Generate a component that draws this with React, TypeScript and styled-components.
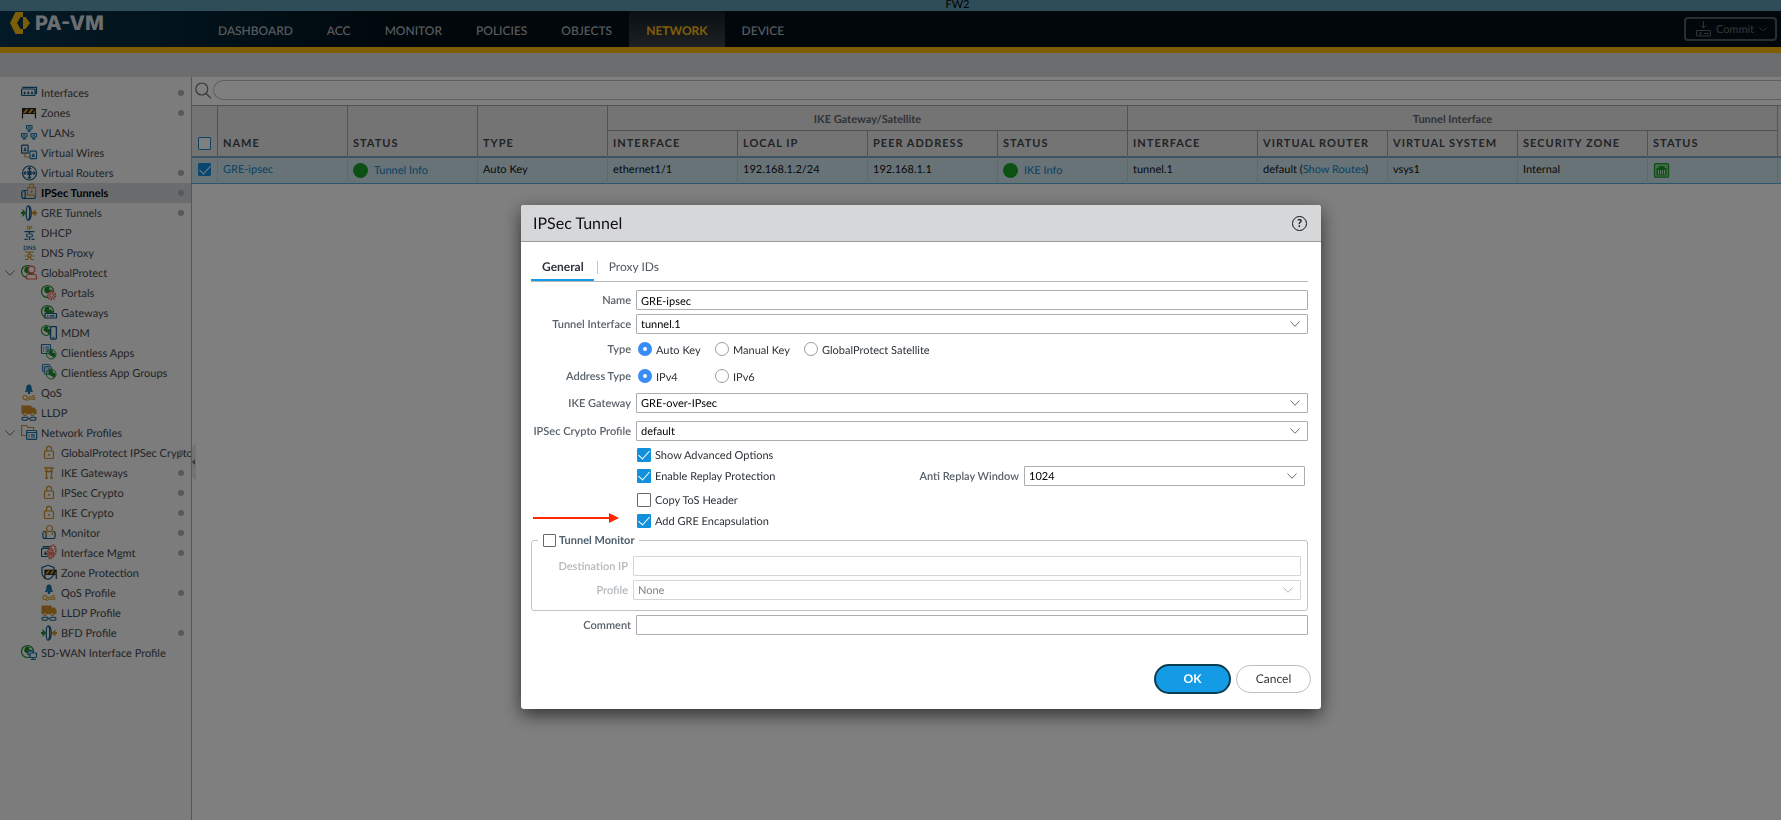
import React from 'react';
import styled, { createGlobalStyle, css } from 'styled-components';

const BLUE = '#1a74a8';
const NAVY = '#125a86';
const GOLD = '#cf9128';
const GREEN = '#1c8c2c';
const RED = '#e8604a';

const GlobalStyle = createGlobalStyle`
  * { box-sizing: border-box; }
  body {
    margin: 0;
    background: #fff;
    font-family: Lato, "Liberation Sans", sans-serif;
    font-size: 11px;
    line-height: 16px;
    text-rendering: geometricPrecision;
    color: #111;
  }
  button, input, select { font: inherit; color: inherit; margin: 0; text-rendering: inherit; }
`;

/* ---------- page frame ---------- */

const Page = styled.div`
  display: flex;
  flex-direction: column;
  min-height: 100vh;
  overflow: hidden;
`;

const HostBar = styled.div`
  height: 11px;
  padding-left: 134px;
  background: #5e99b3;
  color: #000;
  text-align: center;
  line-height: 10px;
`;

const Header = styled.header`
  display: flex;
  height: 42px;
  border-bottom: 6px solid #ffba00;
  background: linear-gradient(90deg, #07364e 0, #042434 200px, #020e16 420px);
`;

const Brand = styled.div`
  display: flex;
  align-items: center;
  gap: 4px;
  width: 201px;
  height: 24px;
  padding-left: 10px;
  color: #d8dde0;
  font-family: Inter, Lato, sans-serif;
  font-size: 20px;
  font-weight: 800;
`;

const Nav = styled.nav`
  display: flex;
`;

const NavLink = styled.a<{ $active?: boolean }>`
  display: flex;
  align-items: center;
  padding: 3px 17px 0;
  font-size: 12px;
  font-weight: 500;
  text-decoration: none;
  color: ${(p) => (p.$active ? '#fcbf10' : '#b2bac0')};
  ${(p) =>
    p.$active &&
    css`
      font-weight: 700;
      background: linear-gradient(#141f26, #3a4246);
    `}
`;

const CommitButton = styled.button`
  display: flex;
  align-items: center;
  gap: 5px;
  width: 93px;
  height: 24px;
  margin: 6px 4px 0 auto;
  padding: 0 8px 0 10px;
  border: 2px solid #555c62;
  border-radius: 4px;
  background: transparent;
  color: #666e74;
`;

const SubBar = styled.div`
  height: 24px;
  background: #d8dadf;
`;

const Workspace = styled.div`
  display: flex;
  flex: 1;
`;

/* ---------- sidebar ---------- */

const Sidebar = styled.nav`
  flex: none;
  width: 192px;
  padding-top: 6px;
  overflow: hidden;
  border-right: 1px solid #aaadb0;
  background: #f8f8f8;
`;

const TreeRow = styled.a<{ $level: number; $selected?: boolean }>`
  display: flex;
  align-items: center;
  height: 20px;
  padding-left: ${(p) => (p.$level ? 25 : 5)}px;
  padding-right: 7px;
  color: ${(p) => (p.$selected ? '#000' : '#42484f')};
  font-weight: ${(p) => (p.$selected ? 700 : 400)};
  background: ${(p) => (p.$selected ? '#d7d9dc' : 'transparent')};
  text-decoration: none;
  white-space: nowrap;
`;

const Twisty = styled.span`
  display: flex;
  flex: none;
  width: 16px;
`;

const TreeIcon = styled.svg`
  flex: none;
  width: 16px;
  height: 16px;
  margin-right: 4px;
  overflow: visible;
`;

const TreeText = styled.span`
  flex: 1;
  min-width: 0;
  padding-top: 2px;
`;

const Dot = styled.span`
  flex: none;
  width: 6px;
  height: 6px;
  border-radius: 50%;
  background: #afb1b3;
`;

/* ---------- grid ---------- */

const Main = styled.main`
  position: relative;
  flex: 1;
  min-width: 0;
`;

const CollapseHandle = styled.button`
  position: absolute;
  top: 366px;
  left: 0;
  width: 4px;
  height: 38px;
  padding: 0;
  border: 0;
  background: transparent;
  svg { display: block; }
`;

const SearchBar = styled.div`
  display: flex;
  align-items: center;
  gap: 1px;
  height: 28px;
  padding: 0 0 2px 3px;
`;

const SearchInput = styled.input`
  flex: 1;
  height: 20px;
  padding: 0 10px;
  border: 1px solid #bfc1c3;
  border-right: 0;
  border-radius: 10px 0 0 10px;
  background: #fff;
`;

const Grid = styled.table`
  width: 100%;
  table-layout: fixed;
  border-collapse: separate;
  border-spacing: 0;
`;

const HeadCell = styled.th<{ $group?: boolean; $first?: boolean }>`
  height: ${(p) => (p.$group ? 26 : 25)}px;
  padding: ${(p) => (p.$first ? '0 6px 6px' : '0 0 4px 5px')};
  vertical-align: bottom;
  text-align: left;
  font-size: 11px;
  font-weight: 700;
  letter-spacing: 1px;
  color: #43484d;
  background: #e9e9e9;
  white-space: nowrap;
  border-left: ${(p) => (p.$first ? 0 : 1)}px solid #a2a4a6;
  ${(p) =>
    p.$group &&
    css`
      padding: 3px 0 0;
      vertical-align: middle;
      text-align: center;
      letter-spacing: 0;
      color: #62676c;
      border-bottom: 1px solid #a2a4a6;
    `}
  thead tr:first-child > & { border-top: 1px solid #a2a4a6; }
`;

const Cell = styled.td<{ $first?: boolean }>`
  height: 28px;
  padding: ${(p) => (p.$first ? '0 6px 2px' : '0 0 2px 5px')};
  border-top: 2px solid #7fa9bf;
  border-bottom: 1px solid #52acd6;
  border-left: ${(p) => (p.$first ? 0 : 1)}px solid #bdd3dd;
  background: #cfe6ef;
  white-space: nowrap;
`;

const Link = styled.a`
  color: #1283c4;
  text-decoration: none;
`;

const StatusLink = styled.span`
  display: flex;
  align-items: center;
  gap: 6px;
  padding-top: 2px;
`;

const Lamp = styled.span`
  width: 15px;
  height: 15px;
  border-radius: 50%;
  background: #18a028;
`;

/* ---------- dialog ---------- */

const Scrim = styled.div`
  position: fixed;
  inset: 0;
  display: grid;
  place-items: center;
  padding: 94px 0 0 61px;
  background: rgba(0, 0, 0, 0.5);
`;

const Dialog = styled.section`
  width: 800px;
  border-radius: 3px;
  background: #fff;
  box-shadow: 0 6px 18px rgba(0, 0, 0, 0.6);
`;

const DialogHeader = styled.header`
  display: flex;
  align-items: center;
  justify-content: space-between;
  height: 37px;
  padding: 0 14px 0 12px;
  border-bottom: 1px solid #999c9f;
  border-radius: 3px 3px 0 0;
  background: #d6d7d9;
`;

const DialogTitle = styled.h1`
  margin: 0;
  padding-top: 2px;
  font-size: 16px;
  font-weight: 400;
  line-height: 20px;
`;

const HelpButton = styled.button`
  width: 15px;
  height: 15px;
  padding: 0;
  border: 1px solid #111;
  border-radius: 50%;
  background: transparent;
  font-size: 11px;
  font-weight: 900;
  line-height: 13px;
`;

const DialogBody = styled.form`
  padding: 0 13px 0 10px;
`;

const Tabs = styled.div`
  display: flex;
  align-items: flex-start;
  height: 40px;
  margin-bottom: 8px;
  padding-top: 13px;
  border-bottom: 1px solid #b4b6b8;
`;

const Tab = styled.button<{ $active?: boolean }>`
  height: 26px;
  padding: 0 10px 0 11px;
  border: 0;
  border-bottom: 2px solid ${(p) => (p.$active ? '#159be5' : 'transparent')};
  background: transparent;
  font-size: 12px;
  font-weight: ${(p) => (p.$active ? 700 : 400)};
  color: ${(p) => (p.$active ? '#2f343a' : '#4f565d')};
`;

const TabDivider = styled.span`
  width: 1px;
  height: 13px;
  margin: 6px 0 0 3px;
  background: #c3c8cc;
`;

const Rows = styled.div<{ $gap?: number }>`
  display: flex;
  flex-direction: column;
  gap: ${(p) => p.$gap ?? 0}px;
`;

const RadioRows = styled(Rows)`
  padding: 1px 0 4px;
`;

const Row = styled.div<{ $labelWidth?: number; $tall?: boolean }>`
  display: grid;
  grid-template-columns: ${(p) => p.$labelWidth ?? 100}px 1fr;
  column-gap: 5px;
  align-items: center;
  height: ${(p) => (p.$tall ? 27 : 20)}px;
`;

const Label = styled.label<{ $off?: boolean }>`
  padding-top: 2px;
  text-align: right;
  font-weight: 600;
  white-space: nowrap;
  color: ${(p) => (p.$off ? '#b4b8bb' : '#596168')};
`;

const fieldBox = css`
  width: 100%;
  height: 20px;
  padding: 2px 4px 0;
  border: 1px solid #abadb0;
  border-radius: 1px;
  background: #fff;
  color: #000;
  &:disabled { border-color: #d3d5d7; color: #808488; opacity: 1; }
`;

const TextInput = styled.input`
  ${fieldBox}
`;

const SelectWrap = styled.div`
  position: relative;
  svg { position: absolute; right: 8px; top: 7px; pointer-events: none; }
`;

const NativeSelect = styled.select`
  ${fieldBox}
  appearance: none;
  display: block;
`;

const Choice = styled.label<{ $gap?: number }>`
  display: flex;
  align-items: center;
  gap: ${(p) => p.$gap ?? 4}px;
  white-space: nowrap;
  color: #2c3238;
`;

const ChoiceText = styled.span`
  padding-top: 2px;
`;

const RadioGroup = styled.div`
  display: grid;
  grid-template-columns: 77px 89px 1fr;
  padding: 3px 0 0 2px;
  ${Choice} { align-items: flex-start; height: 16px; }
  ${ChoiceText} { padding-top: 1px; }
`;

const Radio = styled.input.attrs({ type: 'radio' })`
  appearance: none;
  width: 14px;
  height: 14px;
  border: 1px solid #9a9c9e;
  border-radius: 50%;
  background: #fff;
  &:checked { border: 5px solid #378cf6; }
`;

const CheckBox = styled.input.attrs({ type: 'checkbox' })<{ $size?: number; $edge?: string }>`
  appearance: none;
  display: grid;
  place-items: center;
  flex: none;
  width: ${(p) => p.$size ?? 14}px;
  height: ${(p) => p.$size ?? 14}px;
  border: 1px solid ${(p) => p.$edge ?? '#62686d'};
  border-radius: 1px;
  background: #fff;
  &:checked { border-color: #1191dc; background: #1191dc; }
  &:checked::after {
    content: '';
    width: 5px;
    height: 10px;
    margin-top: -3px;
    border: solid #fff;
    border-width: 0 1px 1px 0;
    transform: rotate(42deg);
  }
`;

const CheckRows = styled(Rows)`
  padding: 4px 0 2px;
`;

const CheckRow = styled.div`
  display: flex;
  align-items: center;
  justify-content: space-between;
  height: 20px;
  padding: 0 3px 0 106px;
`;

const ReplayWindow = styled.div`
  display: grid;
  grid-template-columns: 1fr 281px;
  column-gap: 5px;
  align-items: center;
`;

const MonitorSet = styled.fieldset`
  min-width: 0;
  margin: 0 0 4px;
  padding: 9px 6px 10px;
  border: 1px solid #c0c2c4;
  border-radius: 3px;
  legend {
    height: 14px;
    padding: 0 5px;
    font-weight: 700;
  }
  legend label { height: 14px; color: #4e606e; }
`;

const ArrowMark = styled.svg`
  position: absolute;
  left: 2px;
  top: 2px;
`;

const MarkedRow = styled(CheckRow)`
  position: relative;
`;

const Footer = styled.footer`
  display: flex;
  align-items: center;
  justify-content: flex-end;
  gap: 5px;
  padding: 29px 10px 15px;
`;

const PillButton = styled.button<{ $primary?: boolean }>`
  width: ${(p) => (p.$primary ? 77 : 75)}px;
  height: ${(p) => (p.$primary ? 30 : 28)}px;
  border: ${(p) => (p.$primary ? '2px solid #0b3d50' : '1px solid #bcbec0')};
  border-radius: 15px;
  background: ${(p) => (p.$primary ? '#149be6' : '#fff')};
  color: ${(p) => (p.$primary ? '#fff' : '#33383d')};
  font-size: 12px;
  font-weight: ${(p) => (p.$primary ? 700 : 400)};
`;

/* ---------- drawings ---------- */

const Chevron = ({ color = '#6a7076', size = 10 }: { color?: string; size?: number }) => (
  <svg width={size} height={size * 0.6} viewBox="0 0 10 6" fill="none" stroke={color}>
    <path d="M.5 .5 5 5.3 9.5 .5" />
  </svg>
);

const Globe = ({ x = 0, y = 0, r = 6 }: { x?: number; y?: number; r?: number }) => (
  <g transform={`translate(${x} ${y}) scale(${r / 6})`}>
    <circle cx="6.5" cy="6.5" r="6" fill="none" stroke={GREEN} strokeWidth="1.2" />
    <path
      d="M4 2.5 7 1.2 9 2.6 7.6 4.6 9.6 4.4 12 6.6 10.6 10 8.6 11 7.6 8.6 5 8 3 6 3.6 4Z"
      fill={GREEN}
    />
  </g>
);

const Lock = () => (
  <g fill="none" stroke={GOLD} strokeWidth="1.2">
    <rect x="3.5" y="6" width="9" height="7.5" rx=".8" />
    <path d="M5.5 6V3.800a2.500 2.500 0 0 1 5 0V6" />
    <path d="M8 9v1.700" strokeWidth="1.600" />
  </g>
);

const Truck = () => (
  <g fill="none" strokeWidth="1.1">
    <path d="M1 1h9v7.500H1ZM10 3h3.500L15 5.500v3h-5Z" fill={GOLD} stroke={GOLD} />
    <circle cx="4" cy="9" r="1.500" fill="#f8f8f8" stroke={GOLD} />
    <circle cx="11.500" cy="9" r="1.500" fill="#f8f8f8" stroke={GOLD} />
    <path d="M7 12.200H2.500a1.500 1.500 0 0 0 0 3h3L8 12.700M9 15.200h4.500a1.500 1.500 0 0 0 0-3h-3L8 14.700" stroke={NAVY} />
  </g>
);

const Gre = () => (
  <g fill="none">
    <path d="M0 8h3" stroke={GREEN} strokeWidth="2" />
    <path d="M1.500 4 5 8l-3.500 4Z" fill={GREEN} />
    <path d="M14.500 4.500 10.500 8l4 3.500Z" fill={GOLD} />
    <path d="M13 8h3" stroke={GOLD} strokeWidth="2" />
    <ellipse cx="7" cy="8" rx="1.800" ry="7.200" stroke={NAVY} strokeWidth="1.300" />
    <path d="M7.500 .8c3.600 1 3.600 13.400 0 14.400" stroke={NAVY} strokeWidth="1.300" />
  </g>
);

const Barrier = () => (
  <g>
    <path d="M1 3h14v6H1Z" fill="#222" />
    <path d="M2 8 5 4h2.500l-3 4ZM7 8l3-4h2.500l-3 4ZM12 8l2-2.700V8Z" fill="#e0a520" />
    <path d="M1.500 9v4.500M14.500 9v4.500" stroke="#222" strokeWidth="1.200" />
  </g>
);

const Qos = () => (
  <g>
    <path d="M8 -.5C5.500 -.5 5.200 2 5.200 4.500L3.800 7h2L8 5.500l2 1.500h2L10.800 4.500C10.800 2 10.500 -.5 8 -.5Z" fill={BLUE} />
    <path d="M6.800 5.500h2.400V9H6.800Z" fill={BLUE} />
    <text x="8" y="15" textAnchor="middle" fontSize="7" fontWeight="700" fill={GOLD} fontFamily="Lato">
      QoS
    </text>
  </g>
);

const Pc = ({ x, y }: { x: number; y: number }) => (
  <g transform={`translate(${x} ${y})`} fill="none" stroke={BLUE} strokeWidth="1.200">
    <rect x=".5" y=".5" width="5.500" height="3.500" rx=".5" />
    <path d="M3.200 4v1.600M1.500 5.800H5M2 2.200h2.500" />
  </g>
);

const Sheet = ({ x, y, s = 1 }: { x: number; y: number; s?: number }) => (
  <g transform={`translate(${x} ${y}) scale(${s})`} fill="none" stroke={BLUE} strokeWidth="1.200">
    <rect x=".5" y=".5" width="9" height="9" rx=".5" fill="#f8f8f8" />
    <path d="M2 3h1.200M4.500 3H8M2 5h1.200M4.500 5H8M2 7h1.200M4.500 7H8" />
  </g>
);

const ICONS: Record<string, React.ReactNode> = {
  interfaces: (
    <g fill="none" stroke={NAVY} strokeWidth="1.200">
      <path d="M2 3.500V2.300h13.500v6H14" />
      <rect x=".6" y="4" width="13.400" height="6.500" rx=".8" />
      <path d="M2.500 8.500h2.200M6.200 8.500h2.200M9.900 8.500h2.200M3.600 6.500v2M7.300 6.500v2M11 6.500v2" strokeWidth="1.500" />
    </g>
  ),
  zones: <Barrier />,
  vlans: (
    <g>
      <Pc x={5} y={0} />
      <Pc x={0} y={8} />
      <Pc x={9.5} y={8} />
      <path d="M8 6v1.500" stroke={BLUE} />
    </g>
  ),
  wires: (
    <g fill="none" strokeWidth="1.200">
      <rect x=".6" y=".1" width="6.500" height="8" rx=".6" stroke={NAVY} />
      <rect x="9" y="6.100" width="6.500" height="7.500" rx=".6" stroke={BLUE} />
      <path d="M2.500 5.500h3M4 2.500v3M10.800 11.200h3M12.300 8.500v2.500" stroke={BLUE} strokeWidth="1.700" />
      <path d="M4 8.500v3.500h5" stroke={GOLD} />
    </g>
  ),
  routers: (
    <g fill="none" stroke={NAVY} strokeWidth="1.200">
      <circle cx="8.500" cy="8" r="7" />
      <path d="M8.500 2.500v11M3 8h11M6.800 4.200l1.700-1.700 1.700 1.700M6.800 11.800l1.700 1.700 1.700-1.700M4.700 6.300 3 8l1.700 1.700M12.300 6.300 14 8l-1.700 1.700M6.500 6l4 4M10.500 6l-4 4" />
    </g>
  ),
  ipsec: (
    <g fill="none" strokeWidth="1.200">
      <ellipse cx="2.500" cy="9.500" rx="1.800" ry="4" stroke={NAVY} />
      <path d="M2.500 5.500H6M2.500 13.500h10.500c1 0 1.500-1.500 1.500-3" stroke={NAVY} />
      <rect x="6.600" y="2.600" width="8" height="7.500" rx=".6" stroke={GOLD} />
      <path d="M8.500 2.500V1a2.100 2.100 0 0 1 4.200 0v1.500M9.500 6.500h2.200M10.600 5v3" stroke={GOLD} />
    </g>
  ),
  gre: <Gre />,
  dhcp: (
    <g fill="none" stroke={NAVY} strokeWidth="1.200">
      <text x="8.500" y="5" textAnchor="middle" fontSize="6" fontWeight="700" fill={GOLD} stroke="none" fontFamily="Lato">
        IP
      </text>
      <path d="M3.500 6.600h10M8.500 6.600v2M3.500 14.400h3M10.500 14.400h3M8.500 12.500v2.500" />
      <rect x="5.500" y="9" width="6" height="3" rx="1.500" stroke={BLUE} />
    </g>
  ),
  dns: (
    <g fill="none" stroke={GOLD} strokeWidth="1.200">
      <text x="8.500" y="5" textAnchor="middle" fontSize="6" fontWeight="700" fill={BLUE} stroke="none" fontFamily="Lato">
        DNS
      </text>
      <path d="M4 7h9M8.500 7v2M4 14.500h2.500L8 12M13 14.500h-2.500L9 12M3.500 11h2M11.500 11h2" />
      <circle cx="8.500" cy="10.500" r="1.700" />
    </g>
  ),
  gp: (
    <g>
      <Globe />
      <circle cx="10.500" cy="4.500" r="3.400" fill="#f8f8f8" stroke={RED} strokeWidth="1.200" />
      <path d="M5.500 14v-2.500q0-2 2-2h6q2 0 2 2v2.500Z" fill="#f8f8f8" stroke={RED} strokeWidth="1.200" />
    </g>
  ),
  portals: (
    <g>
      <Globe />
      <circle cx="10.500" cy="10.500" r="3.800" fill="#f8f8f8" stroke={RED} strokeWidth="2" strokeDasharray="1.600 1" />
      <circle cx="10.500" cy="10.500" r="1.800" fill="none" stroke={RED} />
    </g>
  ),
  gateways: (
    <g>
      <Globe />
      <rect x="4" y="8.500" width="11.500" height="4.500" rx=".6" fill="#f8f8f8" stroke={NAVY} strokeWidth="1.200" />
      <path d="M6 10.800h1.500M9 10.800h4.500" stroke={NAVY} strokeWidth="1.200" />
    </g>
  ),
  mdm: (
    <g>
      <Globe r={5} />
      <rect x="9.600" y="1.600" width="5.800" height="12.500" rx=".8" fill="#f8f8f8" stroke={NAVY} strokeWidth="1.300" />
      <path d="M11.500 12.600h2" stroke={NAVY} />
    </g>
  ),
  apps: (
    <g>
      <Sheet x={0} y={-1} />
      <Globe x={5} y={4} r={4.800} />
    </g>
  ),
  appGroups: (
    <g>
      <Sheet x={1} y={-1} s={0.800} />
      <Sheet x={3} y={1.500} s={0.800} />
      <Globe x={5} y={4} r={4.800} />
    </g>
  ),
  qos: <Qos />,
  lldp: <Truck />,
  profiles: (
    <g fill="none" strokeWidth="1.200">
      <path d="M5 10.500H.6V.5h5l1.500 2h5.500v2" stroke={GOLD} />
      <rect x="5.600" y="5.500" width="10" height="8.800" rx=".6" stroke={BLUE} fill="#f8f8f8" />
      <path d="M5.600 7.500h10M7.500 9.800h1.200M10 9.800h4M7.500 12h1.200M10 12h4" stroke={BLUE} />
    </g>
  ),
  lock: <Lock />,
  torii: (
    <path d="M3 3h10M4 6.500h8M5.500 3v10M10.500 3v10M4 13h3M9 13h3" stroke={GOLD} strokeWidth="1.300" fill="none" />
  ),
  monitor: (
    <g fill="none" strokeWidth="1.200">
      <path d="M4 6.500H3C1.500 6.500 1.500 13.500 3 13.500h10c1.500 0 1.500-7 0-7h-1M4 6.500c1.500 0 1.500 7 0 7" stroke={NAVY} />
      <circle cx="8.500" cy="3.500" r="3" stroke={GOLD} />
      <path d="M5.500 10V8.500q0-1.500 1.500-2h3q1.500.5 1.500 2V10" stroke={GOLD} />
    </g>
  ),
  mgmt: (
    <g fill="none" strokeWidth="1.200">
      <rect x=".6" y="3.500" width="8" height="8" rx=".6" stroke={NAVY} />
      <path d="M1.500 1.800H9M3 9h3M4.500 6.500v2.500" stroke={NAVY} strokeWidth="1.500" />
      <ellipse cx="12" cy="5.500" rx="2.800" ry="5.300" stroke={RED} strokeWidth="1.800" strokeDasharray="1.500 .8" />
      <ellipse cx="9.500" cy="8.500" rx="3" ry="5" stroke={RED} fill="#f5b5a8" strokeWidth="1.800" strokeDasharray="1.500 .8" />
      <circle cx="9.500" cy="8.500" r="1.200" stroke={RED} />
    </g>
  ),
  zoneProtection: (
    <g>
      <path d="M7 .3 13 2.500v5c0 3.500-3 5.800-6 7-3-1.200-6-3.500-6-7v-5Z" fill="none" stroke={NAVY} strokeWidth="1.200" />
      <g transform="translate(2.500 2) scale(.88)">
        <Barrier />
      </g>
    </g>
  ),
  sdwan: (
    <g>
      <Globe />
      <g fill="#f8f8f8" stroke={BLUE} strokeWidth="1.200">
        <rect x="7" y="6" width="5" height="3.500" />
        <rect x="9" y="8" width="6.500" height="4.500" rx=".5" />
        <path d="M12.200 12.500v1.800M9.500 14.500h5.500" />
      </g>
    </g>
  ),
};

type Item = { text: string; icon: string; level?: number; dot?: boolean; open?: boolean; selected?: boolean };

const TREE: Item[] = [
  { text: 'Interfaces', icon: 'interfaces', dot: true },
  { text: 'Zones', icon: 'zones', dot: true },
  { text: 'VLANs', icon: 'vlans' },
  { text: 'Virtual Wires', icon: 'wires' },
  { text: 'Virtual Routers', icon: 'routers', dot: true },
  { text: 'IPSec Tunnels', icon: 'ipsec', dot: true, selected: true },
  { text: 'GRE Tunnels', icon: 'gre', dot: true },
  { text: 'DHCP', icon: 'dhcp' },
  { text: 'DNS Proxy', icon: 'dns' },
  { text: 'GlobalProtect', icon: 'gp', open: true },
  { text: 'Portals', icon: 'portals', level: 1 },
  { text: 'Gateways', icon: 'gateways', level: 1 },
  { text: 'MDM', icon: 'mdm', level: 1 },
  { text: 'Clientless Apps', icon: 'apps', level: 1 },
  { text: 'Clientless App Groups', icon: 'appGroups', level: 1 },
  { text: 'QoS', icon: 'qos' },
  { text: 'LLDP', icon: 'lldp' },
  { text: 'Network Profiles', icon: 'profiles', open: true },
  { text: 'GlobalProtect IPSec Crypto', icon: 'lock', level: 1, dot: true },
  { text: 'IKE Gateways', icon: 'torii', level: 1, dot: true },
  { text: 'IPSec Crypto', icon: 'lock', level: 1, dot: true },
  { text: 'IKE Crypto', icon: 'lock', level: 1, dot: true },
  { text: 'Monitor', icon: 'monitor', level: 1, dot: true },
  { text: 'Interface Mgmt', icon: 'mgmt', level: 1, dot: true },
  { text: 'Zone Protection', icon: 'zoneProtection', level: 1 },
  { text: 'QoS Profile', icon: 'qos', level: 1, dot: true },
  { text: 'LLDP Profile', icon: 'lldp', level: 1 },
  { text: 'BFD Profile', icon: 'gre', level: 1, dot: true },
  { text: 'SD-WAN Interface Profile', icon: 'sdwan' },
];

const NAV = ['DASHBOARD', 'ACC', 'MONITOR', 'POLICIES', 'OBJECTS', 'NETWORK', 'DEVICE'];
const LEAF_COLUMNS = [
  'INTERFACE', 'LOCAL IP', 'PEER ADDRESS', 'STATUS',
  'INTERFACE', 'VIRTUAL ROUTER', 'VIRTUAL SYSTEM', 'SECURITY ZONE', 'STATUS',
];

const SelectField = ({ id, value, disabled }: { id: string; value: string; disabled?: boolean }) => (
  <SelectWrap>
    <NativeSelect id={id} defaultValue={value} disabled={disabled}>
      <option>{value}</option>
    </NativeSelect>
    <Chevron color={disabled ? '#b4b8bb' : '#6a7076'} />
  </SelectWrap>
);

const RadioChoice = ({ name, text, checked }: { name: string; text: string; checked?: boolean }) => (
  <Choice>
    <Radio name={name} defaultChecked={checked} />
    <ChoiceText>{text}</ChoiceText>
  </Choice>
);

const CheckChoice = ({ text, checked }: { text: string; checked?: boolean }) => (
  <Choice>
    <CheckBox defaultChecked={checked} />
    <ChoiceText>{text}</ChoiceText>
  </Choice>
);

const TunnelGrid = () => (
  <Grid>
    <colgroup>
      <col style={{ width: 25 }} />
      {Array.from({ length: 12 }, (_, i) => (
        <col key={i} style={{ width: 130 }} />
      ))}
      <col />
    </colgroup>
    <thead>
      <tr>
        <HeadCell rowSpan={2} $first>
          <CheckBox $size={13} $edge="#1b87c4" aria-label="Select all" />
        </HeadCell>
        <HeadCell rowSpan={2}>NAME</HeadCell>
        <HeadCell rowSpan={2}>STATUS</HeadCell>
        <HeadCell rowSpan={2}>TYPE</HeadCell>
        <HeadCell colSpan={4} $group>IKE Gateway/Satellite</HeadCell>
        <HeadCell colSpan={5} $group>Tunnel Interface</HeadCell>
        <HeadCell rowSpan={2} />
      </tr>
      <tr>
        {LEAF_COLUMNS.map((name, i) => (
          <HeadCell key={i}>{name}</HeadCell>
        ))}
      </tr>
    </thead>
    <tbody>
      <tr>
        <Cell $first>
          <CheckBox $size={13} defaultChecked aria-label="Select GRE-ipsec" />
        </Cell>
        <Cell><Link href="#">GRE-ipsec</Link></Cell>
        <Cell><StatusLink><Lamp /><Link href="#">Tunnel Info</Link></StatusLink></Cell>
        <Cell>Auto Key</Cell>
        <Cell>ethernet1/1</Cell>
        <Cell>192.168.1.2/24</Cell>
        <Cell>192.168.1.1</Cell>
        <Cell><StatusLink><Lamp /><Link href="#">IKE Info</Link></StatusLink></Cell>
        <Cell>tunnel.1</Cell>
        <Cell>default (<Link href="#">Show Routes</Link>)</Cell>
        <Cell>vsys1</Cell>
        <Cell>Internal</Cell>
        <Cell>
          <StatusLink>
            <svg width="17" height="15" viewBox="0 0 17 15" fill="none">
              <rect x="1.500" y=".7" width="14" height="13.500" rx="1" fill="#8fd094" stroke="#18a028" strokeWidth="1.300" />
              <path d="M3.500 12.500V5h2V3h6v2h2v7.500Z" fill="#18a028" />
              <path d="M5.500 7v4.500M7.500 7v4.500M9.500 7v4.500M11.500 7v4.500" stroke="#c4e8c8" />
            </svg>
          </StatusLink>
        </Cell>
        <Cell />
      </tr>
    </tbody>
  </Grid>
);

const TunnelDialog = () => (
  <Scrim>
    <Dialog role="dialog" aria-labelledby="dialog-title">
      <DialogHeader>
        <DialogTitle id="dialog-title">IPSec Tunnel</DialogTitle>
        <HelpButton aria-label="Help">?</HelpButton>
      </DialogHeader>
      <DialogBody onSubmit={(e) => e.preventDefault()}>
        <Tabs role="tablist">
          <Tab type="button" role="tab" aria-selected $active>General</Tab>
          <TabDivider />
          <Tab type="button" role="tab">Proxy IDs</Tab>
        </Tabs>
        <Rows $gap={4}>
          <Row>
            <Label htmlFor="name">Name</Label>
            <TextInput id="name" defaultValue="GRE-ipsec" />
          </Row>
          <Row>
            <Label htmlFor="tunnel">Tunnel Interface</Label>
            <SelectField id="tunnel" value="tunnel.1" />
          </Row>
        </Rows>
        <RadioRows>
          <Row $tall>
            <Label as="span" id="type-label">Type</Label>
            <RadioGroup role="radiogroup" aria-labelledby="type-label">
              <RadioChoice name="type" text="Auto Key" checked />
              <RadioChoice name="type" text="Manual Key" />
              <RadioChoice name="type" text="GlobalProtect Satellite" />
            </RadioGroup>
          </Row>
          <Row $tall>
            <Label as="span" id="address-label">Address Type</Label>
            <RadioGroup role="radiogroup" aria-labelledby="address-label">
              <RadioChoice name="address" text="IPv4" checked />
              <RadioChoice name="address" text="IPv6" />
            </RadioGroup>
          </Row>
        </RadioRows>
        <Rows $gap={8}>
          <Row>
            <Label htmlFor="gateway">IKE Gateway</Label>
            <SelectField id="gateway" value="GRE-over-IPsec" />
          </Row>
          <Row>
            <Label htmlFor="crypto">IPSec Crypto Profile</Label>
            <SelectField id="crypto" value="default" />
          </Row>
        </Rows>
        <CheckRows $gap={4}>
          <Rows $gap={1}>
            <CheckRow>
              <CheckChoice text="Show Advanced Options" checked />
            </CheckRow>
            <CheckRow>
              <CheckChoice text="Enable Replay Protection" checked />
              <ReplayWindow>
                <Label htmlFor="replay">Anti Replay Window</Label>
                <SelectField id="replay" value="1024" />
              </ReplayWindow>
            </CheckRow>
          </Rows>
          <Rows $gap={1}>
            <CheckRow>
              <CheckChoice text="Copy ToS Header" />
            </CheckRow>
            <MarkedRow>
              <ArrowMark width="88" height="10" viewBox="0 0 88 10" aria-hidden>
                <path d="M0 5h78" stroke="#ff2600" strokeWidth="2" />
                <path d="M76 0 86 5 76 10Z" fill="#ff2600" />
              </ArrowMark>
              <CheckChoice text="Add GRE Encapsulation" checked />
            </MarkedRow>
          </Rows>
        </CheckRows>
        <MonitorSet>
          <legend>
            <Choice $gap={3}>
              <CheckBox $size={13} />
              <ChoiceText>Tunnel Monitor</ChoiceText>
            </Choice>
          </legend>
          <Rows $gap={4}>
            <Row $labelWidth={90}>
              <Label htmlFor="destination" $off>Destination IP</Label>
              <TextInput id="destination" disabled />
            </Row>
            <Row $labelWidth={90}>
              <Label htmlFor="profile" $off>Profile</Label>
              <SelectField id="profile" value="None" disabled />
            </Row>
          </Rows>
        </MonitorSet>
        <Row>
          <Label htmlFor="comment">Comment</Label>
          <TextInput id="comment" />
        </Row>
      </DialogBody>
      <Footer>
        <PillButton $primary>OK</PillButton>
        <PillButton>Cancel</PillButton>
      </Footer>
    </Dialog>
  </Scrim>
);

export default function App() {
  return (
    <>
      <GlobalStyle />
      <Page>
        <HostBar>FW2</HostBar>
        <Header>
          <Brand>
            <svg width="21" height="22" viewBox="0 0 21 22" fill="#f8bd12">
              <path d="M5.500 0H13v5h-2.500L7 11l3.500 6H13v5H5.500L0 11Z" />
              <path d="M13 5h2.500L20 11l-4.500 6H13Z" />
            </svg>
            PA-VM
          </Brand>
          <Nav>
            {NAV.map((name) => (
              <NavLink key={name} href="#" $active={name === 'NETWORK'}>{name}</NavLink>
            ))}
          </Nav>
          <CommitButton>
            <svg width="15" height="16" viewBox="0 0 15 16" fill="none" stroke="#666e74">
              <path d="M7.500 0v7M5 4.500 7.500 7 10 4.500M8 12.500h5" />
              <rect x=".5" y="9.500" width="14" height="5.500" rx=".5" />
              <circle cx="4.500" cy="12.500" r="1" />
            </svg>
            <ChoiceText>Commit</ChoiceText>
            <Chevron color="#666e74" size={8} />
          </CommitButton>
        </Header>
        <SubBar />
        <Workspace>
          <Sidebar>
            {TREE.map((item) => (
              <TreeRow key={item.text} href="#" $level={item.level ?? 0} $selected={item.selected}>
                <Twisty>{item.open && <Chevron />}</Twisty>
                <TreeIcon viewBox="0 0 16 16">{ICONS[item.icon]}</TreeIcon>
                <TreeText>{item.text}</TreeText>
                {item.dot && <Dot />}
              </TreeRow>
            ))}
          </Sidebar>
          <Main>
            <CollapseHandle aria-label="Collapse sidebar">
              <svg width="4" height="38" viewBox="0 0 4 38">
                <path d="M0 4 4 0v38L0 34Z" fill="#e6e6e6" />
                <path d="M0 19 3 16v6Z" fill="#6a6e72" />
              </svg>
            </CollapseHandle>
            <SearchBar>
              <svg width="17" height="17" viewBox="0 0 17 17" fill="none" stroke="#62686e" strokeWidth="1.100">
                <circle cx="6.800" cy="7" r="6" />
                <path d="m11.200 11.500 4.800 4.800" />
              </svg>
              <SearchInput aria-label="Search" />
            </SearchBar>
            <TunnelGrid />
          </Main>
        </Workspace>
      </Page>
      <TunnelDialog />
    </>
  );
}
